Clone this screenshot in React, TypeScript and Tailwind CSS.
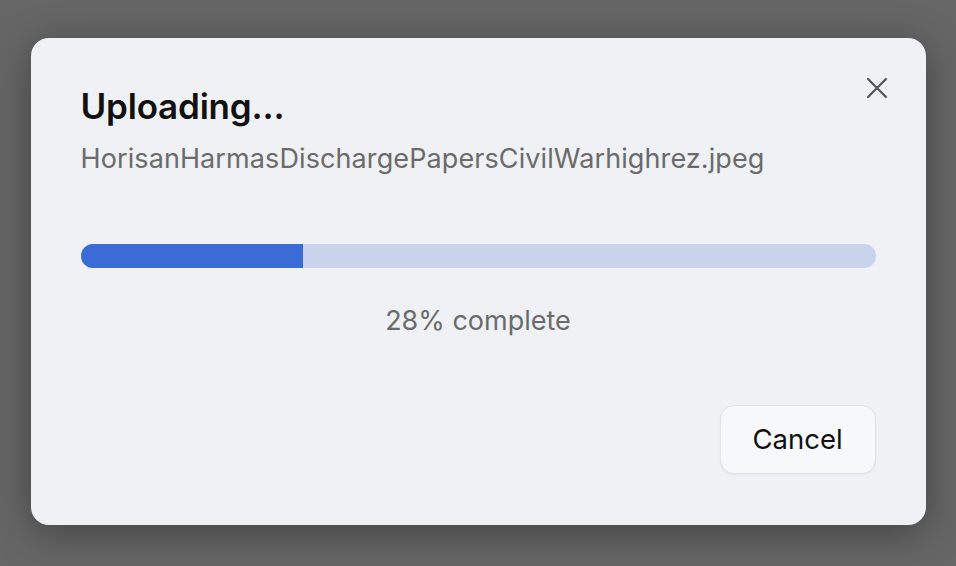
import React from "react";

export default function App() {
  const pct = 28;
  return (
    <div
      className="w-[956px] h-[566px] bg-[#666666] flex items-start justify-center pt-[38px] overflow-hidden"
      style={{ fontFamily: "Inter, 'Noto Sans', sans-serif" }}
    >
      <div className="relative w-[895px] h-[487px] bg-[#eff1f4] rounded-[18px] shadow-[0_8px_40px_rgba(0,0,0,0.35)] px-[50px] pt-[48px] flex flex-col">
        <button className="absolute right-[36px] top-[37px] w-[26px] h-[26px] flex items-center justify-center text-[#555555]">
          <svg width="22" height="22" viewBox="0 0 22 22" fill="none" stroke="currentColor" strokeWidth="2.2" strokeLinecap="round">
            <path d="M2 2 L20 20 M20 2 L2 20" />
          </svg>
        </button>
        <h1 className="text-[35px] font-semibold text-[#111111] leading-[40px] tracking-[-0.2px]">Uploading...</h1>
        <p className="mt-[17px] text-[27px] text-[#6b6b6b] leading-[32px] tracking-[0.1px]">
          HorisanHarmasDischargePapersCivilWarhighrez.jpeg
        </p>
        <div className="mt-[69px] h-[24px] w-full rounded-full bg-[#c9d4ec] overflow-hidden">
          <div className="h-full bg-[#3b6bd4]" style={{ width: `${pct}%` }} />
        </div>
        <p className="mt-[37px] text-center text-[27px] text-[#6b6b6b] leading-[32px]">{pct}% complete</p>
        <div className="flex justify-end mt-[68px]">
          <button className="w-[156px] h-[69px] rounded-[14px] bg-[#f6f8fa] border border-[#e2e4e8] shadow-[0_1px_2px_rgba(0,0,0,0.05)] text-[27.5px] text-[#111111]">
            Cancel
          </button>
        </div>
      </div>
    </div>
  );
}
